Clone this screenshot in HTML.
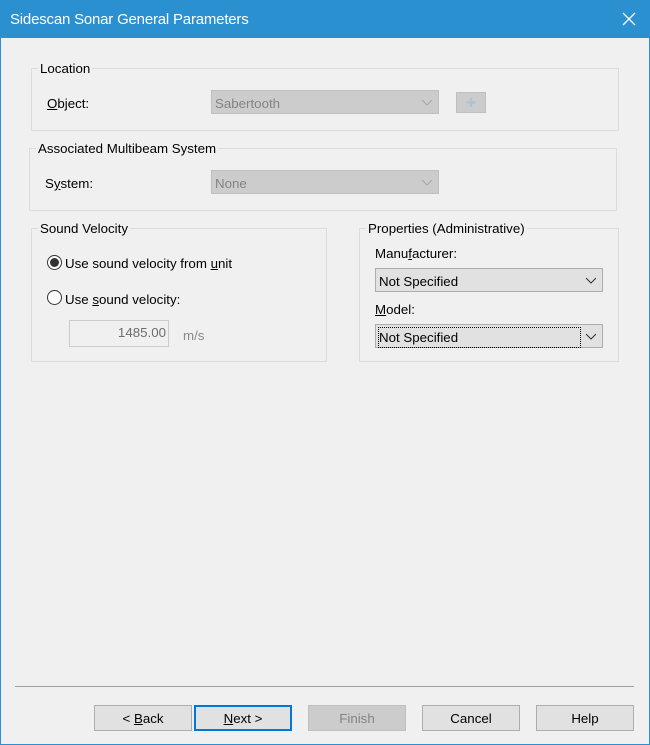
<!DOCTYPE html>
<html><head><style>
*{box-sizing:border-box;margin:0;padding:0}
body{width:650px;height:745px;background:#f0f0f0;font-family:"Liberation Sans",sans-serif;font-size:13.3px;color:#000;position:relative;overflow:hidden;letter-spacing:0}
.win{position:absolute;left:0;top:0;width:650px;height:745px;border:1px solid #2b8fd0}
.title{position:absolute;left:0;top:0;width:650px;height:38px;background:#2b90d0;color:#fff;font-size:15px;padding:11px 0 0 10px;letter-spacing:-0.2px}
.x{position:absolute;right:14px;top:12px}
.a{position:absolute;padding-top:1px}
.g{position:absolute;border:1px solid #dcdcdc}
.gl{position:absolute;background:#f0f0f0;padding:1px 2px 0;top:-9px;left:6px;line-height:16px}
.cb{position:absolute;border:1px solid #adadad;background:#e1e1e1;padding:5px 0 0 3px;height:24px}
.cb.dis{background:#cccccc;border-color:#bfbfbf;color:#838383}
.arr{position:absolute;right:6px;top:8px}
.btn{position:absolute;top:705px;width:98px;height:26px;border:1px solid #adadad;background:#e1e1e1;text-align:center;line-height:25px}
.rad{position:absolute;width:15px;height:15px;border-radius:50%;border:1px solid #333;background:#fff}
u{text-decoration:underline}
</style></head><body>
<div class="win"></div>
<div class="title">Sidescan Sonar General Parameters
<svg class="x" width="14" height="14"><path d="M1 1L13 13M13 1L1 13" stroke="#fff" stroke-width="1.3"/></svg></div>

<div class="g" style="left:31px;top:68px;width:588px;height:63px"><span class="gl" style="left:6px">Location</span></div>
<div class="a" style="left:47px;top:95px"><u>O</u>bject:</div>
<div class="cb dis" style="left:211px;top:90px;width:228px">Sabertooth<svg class="arr" width="10" height="8"><path d="M0 1L5 6L10 1" stroke="#a5a5a5" fill="none"/></svg></div>
<div class="a" style="left:456px;top:92px;width:30px;height:21px;background:#cccccc;border:1px solid #bfbfbf;padding:0"><svg width="28" height="19"><path d="M14 5v9M9.5 9.5h9" stroke="#a9c4dc" stroke-width="2.5"/></svg></div>

<div class="g" style="left:29px;top:148px;width:588px;height:63px"><span class="gl" style="left:6px">Associated Multibeam System</span></div>
<div class="a" style="left:45px;top:175px">S<u>y</u>stem:</div>
<div class="cb dis" style="left:211px;top:170px;width:228px">None<svg class="arr" width="10" height="8"><path d="M0 1L5 6L10 1" stroke="#a5a5a5" fill="none"/></svg></div>

<div class="g" style="left:31px;top:228px;width:296px;height:134px"><span class="gl" style="left:6px">Sound Velocity</span></div>
<div class="rad" style="left:47px;top:255px;padding:0"><div style="position:absolute;left:2px;top:2px;width:9px;height:9px;border-radius:50%;background:#333"></div></div>
<div class="a" style="left:65px;top:255px">Use sound velocity from <u>u</u>nit</div>
<div class="rad" style="left:47px;top:290px"></div>
<div class="a" style="left:65px;top:291px">Use <u>s</u>ound velocity:</div>
<div class="a" style="left:69px;top:320px;width:100px;height:27px;border:1px solid #ccc;background:#f0f0f0;color:#6d6d6d;text-align:right;padding:4px 2px 0 0">1485.00</div>
<div class="a" style="left:183px;top:327px;color:#8a8a8a">m/s</div>

<div class="g" style="left:359px;top:228px;width:260px;height:134px"><span class="gl" style="left:6px">Properties (Administrative)</span></div>
<div class="a" style="left:375px;top:245px">Manu<u>f</u>acturer:</div>
<div class="cb" style="left:375px;top:268px;width:228px">Not Specified<svg class="arr" width="10" height="8"><path d="M0 1L5 6L10 1" stroke="#333" fill="none"/></svg></div>
<div class="a" style="left:375px;top:301px"><u>M</u>odel:</div>
<div class="cb" style="left:375px;top:324px;width:228px;padding-top:3px"><span style="outline:1px dotted #000;display:inline-block;width:201px;height:19px;padding:2px 0 0 0">Not Specified</span><svg class="arr" width="10" height="8"><path d="M0 1L5 6L10 1" stroke="#333" fill="none"/></svg></div>

<div class="a" style="left:15px;top:686px;width:619px;height:1px;background:#a0a0a0;padding:0"></div>
<div class="btn" style="left:94px">&lt; <u>B</u>ack</div>
<div class="btn" style="left:194px;border:2px solid #0078d7;line-height:23px"><u>N</u>ext &gt;</div>
<div class="btn" style="left:308px;background:#cccccc;border-color:#bfbfbf;color:#838383">Finish</div>
<div class="btn" style="left:422px">Cancel</div>
<div class="btn" style="left:536px">Help</div>
</body></html>
